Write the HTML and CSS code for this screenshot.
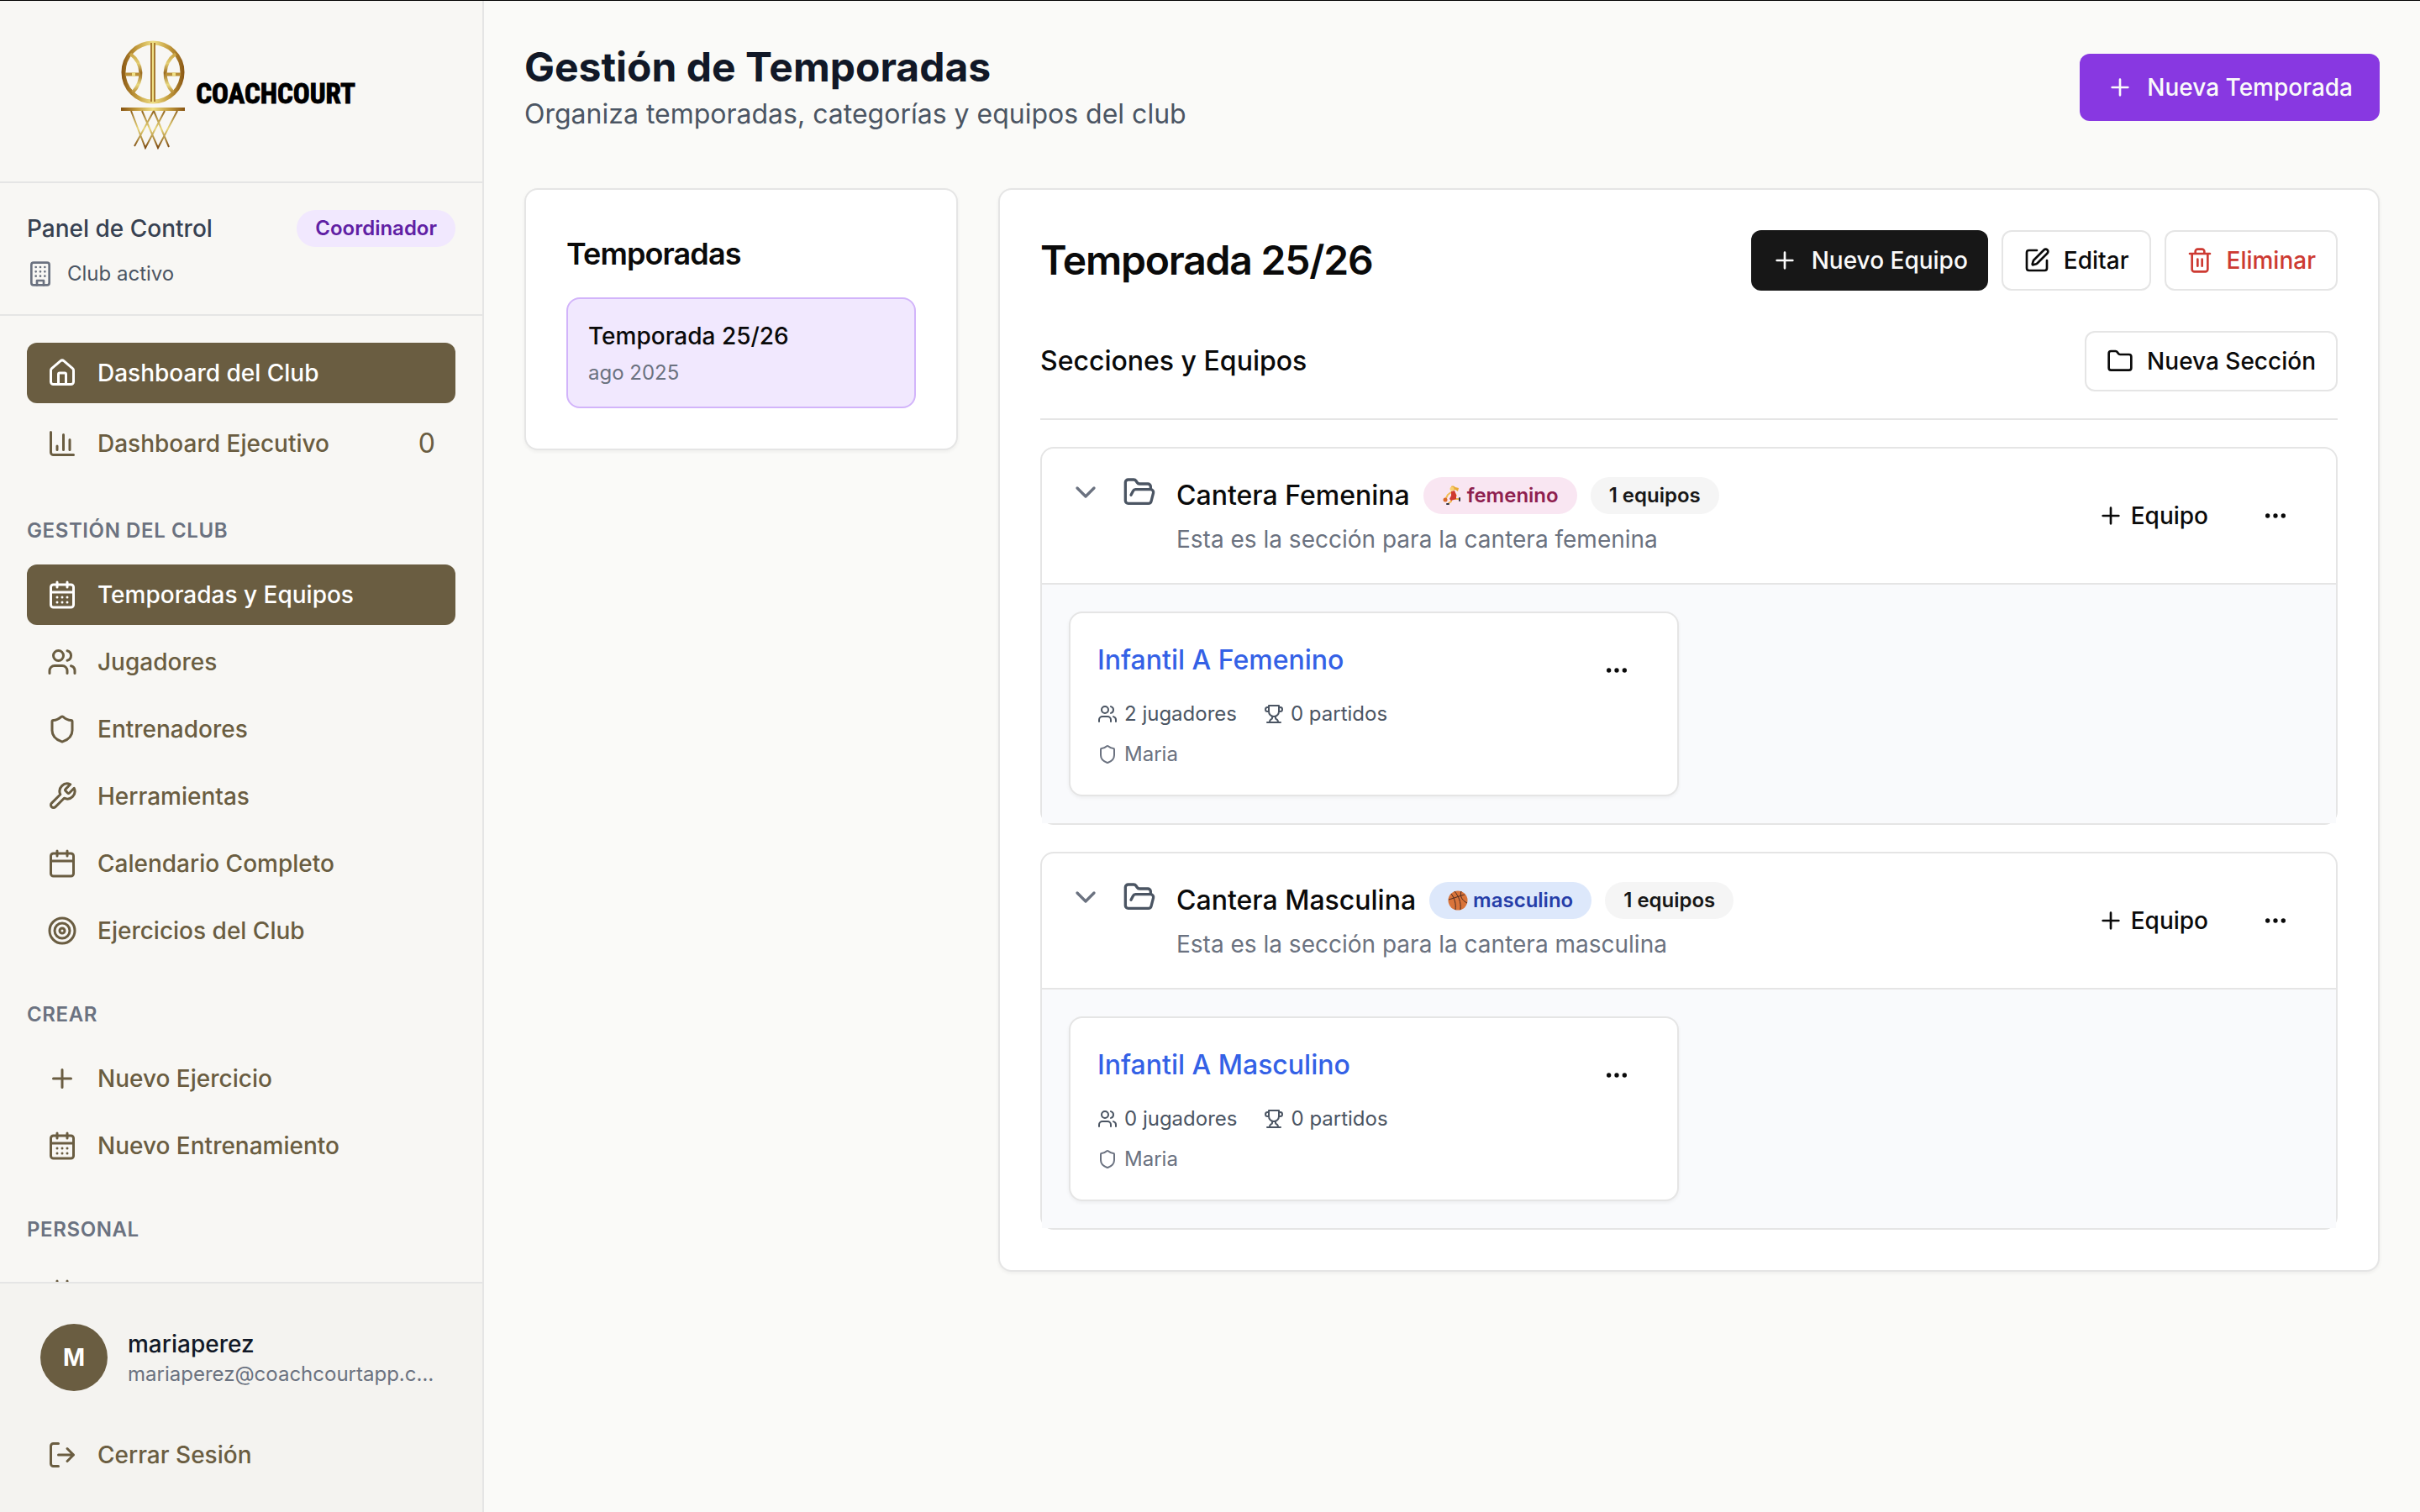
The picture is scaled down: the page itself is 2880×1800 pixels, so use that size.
FILE: index.html
```html
<!DOCTYPE html>
<html lang="es">
<head>
    <meta charset="UTF-8">
    <meta name="viewport" content="width=device-width, initial-scale=1">
    <title>CoachCourt - Gestión de Temporadas</title>
    <link rel="stylesheet" href="styles.css">
</head>
<body>
    <!-- icons -->
    <svg class="sprite" aria-hidden="true">
        <symbol id="home" viewBox="0 0 24 24"><path d="M15 21v-8a1 1 0 0 0-1-1h-4a1 1 0 0 0-1 1v8"/><path d="M3 10a2 2 0 0 1 .709-1.528l7-5.999a2 2 0 0 1 2.582 0l7 5.999A2 2 0 0 1 21 10v9a2 2 0 0 1-2 2H5a2 2 0 0 1-2-2z"/></symbol>
        <symbol id="chart" viewBox="0 0 24 24"><path d="M3 3v16a2 2 0 0 0 2 2h16M18 17V9M13 17V5M8 17v-3"/></symbol>
        <symbol id="calendar" viewBox="0 0 24 24"><path d="M8 2v4M16 2v4M3 10h18"/><rect width="18" height="18" x="3" y="4" rx="2"/></symbol>
        <symbol id="calendar-days" viewBox="0 0 24 24"><path d="M8 2v4M16 2v4M3 10h18M8 14h.01M12 14h.01M16 14h.01M8 18h.01M12 18h.01M16 18h.01"/><rect width="18" height="18" x="3" y="4" rx="2"/></symbol>
        <symbol id="users" viewBox="0 0 24 24"><path d="M16 21v-2a4 4 0 0 0-4-4H6a4 4 0 0 0-4 4v2"/><circle cx="9" cy="7" r="4"/><path d="M22 21v-2a4 4 0 0 0-3-3.87M16 3.13a4 4 0 0 1 0 7.75"/></symbol>
        <symbol id="shield" viewBox="0 0 24 24"><path d="M20 13c0 5-3.5 7.5-7.66 8.95a1 1 0 0 1-.67-.01C7.5 20.5 4 18 4 13V6a1 1 0 0 1 1-1c2 0 4.5-1.2 6.24-2.72a1.17 1.17 0 0 1 1.52 0C14.51 3.81 17 5 19 5a1 1 0 0 1 1 1z"/></symbol>
        <symbol id="wrench" viewBox="0 0 24 24"><path d="M14.7 6.3a1 1 0 0 0 0 1.4l1.6 1.6a1 1 0 0 0 1.4 0l3.77-3.77a6 6 0 0 1-7.94 7.94l-6.91 6.91a2.12 2.12 0 0 1-3-3l6.91-6.91a6 6 0 0 1 7.94-7.94l-3.76 3.76z"/></symbol>
        <symbol id="target" viewBox="0 0 24 24"><circle cx="12" cy="12" r="10"/><circle cx="12" cy="12" r="6"/><circle cx="12" cy="12" r="2"/></symbol>
        <symbol id="plus" viewBox="0 0 24 24"><path d="M5 12h14M12 5v14"/></symbol>
        <symbol id="logout" viewBox="0 0 24 24"><path d="M9 21H5a2 2 0 0 1-2-2V5a2 2 0 0 1 2-2h4M16 17l5-5-5-5M21 12H9"/></symbol>
        <symbol id="building" viewBox="0 0 24 24"><rect width="16" height="20" x="4" y="2" rx="2"/><path d="M9 22v-4h6v4M8 6h.01M16 6h.01M12 6h.01M12 10h.01M12 14h.01M16 10h.01M16 14h.01M8 10h.01M8 14h.01"/></symbol>
        <symbol id="edit" viewBox="0 0 24 24"><path d="M12 3H5a2 2 0 0 0-2 2v14a2 2 0 0 0 2 2h14a2 2 0 0 0 2-2v-7"/><path d="M18.375 2.625a1 1 0 0 1 3 3l-9.013 9.014a2 2 0 0 1-.853.505l-2.873.84a.5.5 0 0 1-.62-.62l.84-2.873a2 2 0 0 1 .506-.852z"/></symbol>
        <symbol id="trash" viewBox="0 0 24 24"><path d="M3 6h18M19 6v14c0 1-1 2-2 2H7c-1 0-2-1-2-2V6M8 6V4c0-1 1-2 2-2h4c1 0 2 1 2 2v2M10 11v6M14 11v6"/></symbol>
        <symbol id="folder" viewBox="0 0 24 24"><path d="M20 20a2 2 0 0 0 2-2V8a2 2 0 0 0-2-2h-7.9a2 2 0 0 1-1.69-.9L9.6 3.9A2 2 0 0 0 7.93 3H4a2 2 0 0 0-2 2v13a2 2 0 0 0 2 2Z"/></symbol>
        <symbol id="folder-open" viewBox="0 0 24 24"><path d="m6 14 1.5-2.9A2 2 0 0 1 9.24 10H20a2 2 0 0 1 1.94 2.5l-1.54 6a2 2 0 0 1-1.95 1.5H4a2 2 0 0 1-2-2V5a2 2 0 0 1 2-2h3.9a2 2 0 0 1 1.69.9l.81 1.2a2 2 0 0 0 1.67.9H18a2 2 0 0 1 2 2v2"/></symbol>
        <symbol id="chevron" viewBox="0 0 24 24"><path d="m6 9 6 6 6-6"/></symbol>
        <symbol id="dots" viewBox="0 0 24 24"><circle cx="12" cy="12" r="1"/><circle cx="19" cy="12" r="1"/><circle cx="5" cy="12" r="1"/></symbol>
        <symbol id="trophy" viewBox="0 0 24 24"><path d="M6 9H4.5a2.5 2.5 0 0 1 0-5H6M18 9h1.5a2.5 2.5 0 0 0 0-5H18M4 22h16M10 14.66V17c0 .55-.47.98-.97 1.21C7.85 18.75 7 20.24 7 22M14 14.66V17c0 .55.47.98.97 1.21C16.15 18.75 17 20.24 17 22M18 2H6v7a6 6 0 0 0 12 0V2Z"/></symbol>
    </svg>

    <aside class="sidebar">
        <div class="logo">
            <svg class="logo-mark" viewBox="0 0 78 132" aria-hidden="true">
                <defs>
                    <linearGradient id="gold" x1="0" y1="0" x2="78" y2="0" gradientUnits="userSpaceOnUse">
                        <stop offset="0" stop-color="#84500f"/>
                        <stop offset=".25" stop-color="#c29a3c"/>
                        <stop offset=".5" stop-color="#efdf85"/>
                        <stop offset=".75" stop-color="#c29a3c"/>
                        <stop offset="1" stop-color="#84500f"/>
                    </linearGradient>
                    <linearGradient id="goldNet" x1="0" y1="84" x2="0" y2="130" gradientUnits="userSpaceOnUse">
                        <stop offset="0" stop-color="#8a5a18"/>
                        <stop offset=".5" stop-color="#e8d67a"/>
                        <stop offset="1" stop-color="#7d4a10"/>
                    </linearGradient>
                    <linearGradient id="goldSeam" x1="0" y1="18" x2="0" y2="64" gradientUnits="userSpaceOnUse">
                        <stop offset="0" stop-color="#c9a445"/>
                        <stop offset=".25" stop-color="#e3cd72"/>
                        <stop offset=".5" stop-color="#9a6a20"/>
                        <stop offset=".8" stop-color="#e9d981"/>
                        <stop offset="1" stop-color="#b98f38"/>
                    </linearGradient>
                </defs>
                <g fill="none">
                    <circle cx="39" cy="40" r="35" stroke="url(#gold)" stroke-width="5"/>
                    <path d="M12 18C28 30 28 50 15 64M66 18C50 30 50 50 63 64" stroke="url(#goldSeam)" stroke-width="4"/>
                    <path d="M6 42.500h18M54 42.500h18" stroke="#b98f38" stroke-width="4"/>
                    <path d="M14 42.500h4M62 42.500h4" stroke="#efdf85" stroke-width="4"/>
                    <path d="M39 5v70" stroke="#a87a30" stroke-width="6"/>
                    <path d="M39 5v70" stroke="#efdf85" stroke-width="2"/>
                    <path d="M1 84h76" stroke="url(#gold)" stroke-width="4"/>
                    <path d="M13 86 30 130 53 86M26 86 45 130 68 86M40 86 17 128M40 86 58 129" stroke="url(#goldNet)" stroke-width="2"/>
                </g>
            </svg>
            <span class="logo-text">COACHCOURT</span>
        </div>

        <div class="panel">
            <div class="panel-row">
                <span class="panel-title">Panel de Control</span>
                <span class="badge badge-purple">Coordinador</span>
            </div>
            <div class="panel-club">
                <svg class="icon"><use href="#building"/></svg>
                <span>Club activo</span>
            </div>
        </div>

        <nav class="nav">
            <div class="nav-group">
                <a href="#" class="nav-link active"><svg class="icon"><use href="#home"/></svg><span>Dashboard del Club</span></a>
                <a href="#" class="nav-link"><svg class="icon"><use href="#chart"/></svg><span>Dashboard Ejecutivo</span><span class="nav-count">0</span></a>
            </div>
            <div class="nav-group">
                <h3 class="nav-label">GESTIÓN DEL CLUB</h3>
                <a href="#" class="nav-link active"><svg class="icon"><use href="#calendar-days"/></svg><span>Temporadas y Equipos</span></a>
                <a href="#" class="nav-link"><svg class="icon"><use href="#users"/></svg><span>Jugadores</span></a>
                <a href="#" class="nav-link"><svg class="icon"><use href="#shield"/></svg><span>Entrenadores</span></a>
                <a href="#" class="nav-link"><svg class="icon"><use href="#wrench"/></svg><span>Herramientas</span></a>
                <a href="#" class="nav-link"><svg class="icon"><use href="#calendar"/></svg><span>Calendario Completo</span></a>
                <a href="#" class="nav-link"><svg class="icon"><use href="#target"/></svg><span>Ejercicios del Club</span></a>
            </div>
            <div class="nav-group">
                <h3 class="nav-label">CREAR</h3>
                <a href="#" class="nav-link"><svg class="icon"><use href="#plus"/></svg><span>Nuevo Ejercicio</span></a>
                <a href="#" class="nav-link"><svg class="icon"><use href="#calendar-days"/></svg><span>Nuevo Entrenamiento</span></a>
            </div>
            <div class="nav-group">
                <h3 class="nav-label">PERSONAL</h3>
                <a href="#" class="nav-link" aria-label="Calendario"><svg class="icon"><use href="#calendar"/></svg></a>
            </div>
        </nav>

        <div class="sidebar-footer">
            <div class="profile">
                <div class="avatar">M</div>
                <div class="profile-info">
                    <div class="profile-name">mariaperez</div>
                    <div class="profile-email">mariaperez@coachcourtapp.com</div>
                </div>
            </div>
            <button type="button" class="nav-link"><svg class="icon"><use href="#logout"/></svg><span>Cerrar Sesión</span></button>
        </div>
    </aside>

    <main class="main">
        <header class="page-header">
            <div>
                <h1>Gestión de Temporadas</h1>
                <p>Organiza temporadas, categorías y equipos del club</p>
            </div>
            <button type="button" class="btn btn-primary"><svg class="icon"><use href="#plus"/></svg>Nueva Temporada</button>
        </header>

        <div class="grid">
            <section class="card">
                <h2 class="card-title">Temporadas</h2>
                <button type="button" class="season">
                    <span class="season-name">Temporada 25/26</span>
                    <span class="season-date">ago 2025</span>
                </button>
            </section>

            <section class="card card-wide">
                <div class="row">
                    <h2 class="season-title">Temporada 25/26</h2>
                    <div class="actions">
                        <button type="button" class="btn btn-dark"><svg class="icon"><use href="#plus"/></svg>Nuevo Equipo</button>
                        <button type="button" class="btn btn-outline"><svg class="icon"><use href="#edit"/></svg>Editar</button>
                        <button type="button" class="btn btn-outline btn-danger"><svg class="icon"><use href="#trash"/></svg>Eliminar</button>
                    </div>
                </div>

                <div class="row sections-head">
                    <h3>Secciones y Equipos</h3>
                    <button type="button" class="btn btn-outline"><svg class="icon"><use href="#folder"/></svg>Nueva Sección</button>
                </div>

                <div class="section">
                    <div class="section-head">
                        <button type="button" class="toggle" aria-label="Contraer"><svg class="icon"><use href="#chevron"/></svg></button>
                        <svg class="icon folder"><use href="#folder-open"/></svg>
                        <div class="section-info">
                            <div class="section-name">
                                <h4>Cantera Femenina</h4>
                                <span class="badge badge-pink">
                                    <svg class="emoji" viewBox="0 0 24 24" aria-hidden="true">
                                        <g fill="none" stroke-linecap="round" stroke-linejoin="round">
                                            <path d="M11 8 7 11 5 15M14 8l3 4" stroke="#f3bd55" stroke-width="2"/>
                                            <path d="M11 16 11 19 8 21M15 16l5 0" stroke="#f0b64c" stroke-width="2"/>
                                            <path d="M8 22H6M21 15v3" stroke="#33333d" stroke-width="2"/>
                                        </g>
                                        <path d="M11 7l4-1 2 5v5l-6 2-2-2 2-4z" fill="#cf3a30"/>
                                        <path d="M11 1c2-1 4 0 5 1l4 1-1 4-3-2-4 1z" fill="#e8aa35"/>
                                        <circle cx="12" cy="4" r="2.500" fill="#f9d071"/>
                                        <circle cx="4" cy="17" r="2.500" fill="#d9692a"/>
                                    </svg>
                                    femenino
                                </span>
                                <span class="badge badge-gray">1 equipos</span>
                            </div>
                            <p>Esta es la sección para la cantera femenina</p>
                        </div>
                        <div class="actions">
                            <button type="button" class="btn btn-ghost"><svg class="icon"><use href="#plus"/></svg>Equipo</button>
                            <button type="button" class="btn btn-ghost" aria-label="Más opciones"><svg class="icon"><use href="#dots"/></svg></button>
                        </div>
                    </div>
                    <div class="teams">
                        <article class="team">
                            <div class="team-info">
                                <a href="#" class="team-name">Infantil A Femenino</a>
                                <div class="team-stats">
                                    <span class="stat"><svg class="icon"><use href="#users"/></svg>2 jugadores</span>
                                    <span class="stat"><svg class="icon"><use href="#trophy"/></svg>0 partidos</span>
                                </div>
                                <div class="stat coach"><svg class="icon"><use href="#shield"/></svg>Maria</div>
                            </div>
                            <button type="button" class="btn btn-ghost" aria-label="Más opciones"><svg class="icon"><use href="#dots"/></svg></button>
                        </article>
                    </div>
                </div>

                <div class="section">
                    <div class="section-head">
                        <button type="button" class="toggle" aria-label="Contraer"><svg class="icon"><use href="#chevron"/></svg></button>
                        <svg class="icon folder"><use href="#folder-open"/></svg>
                        <div class="section-info">
                            <div class="section-name">
                                <h4>Cantera Masculina</h4>
                                <span class="badge badge-blue">
                                    <svg class="emoji" viewBox="0 0 24 24" aria-hidden="true">
                                        <circle cx="12" cy="12" r="11.500" fill="#d9743a"/>
                                        <path d="M1 11C8 9 16 6 20 5M8 1c5 6 8 13 7 22M4 4c4 5 6 12 5 19M16 1c-2 6 1 11 7 14" fill="none" stroke="#4a2a20" stroke-width="1"/>
                                    </svg>
                                    masculino
                                </span>
                                <span class="badge badge-gray">1 equipos</span>
                            </div>
                            <p>Esta es la sección para la cantera masculina</p>
                        </div>
                        <div class="actions">
                            <button type="button" class="btn btn-ghost"><svg class="icon"><use href="#plus"/></svg>Equipo</button>
                            <button type="button" class="btn btn-ghost" aria-label="Más opciones"><svg class="icon"><use href="#dots"/></svg></button>
                        </div>
                    </div>
                    <div class="teams">
                        <article class="team">
                            <div class="team-info">
                                <a href="#" class="team-name">Infantil A Masculino</a>
                                <div class="team-stats">
                                    <span class="stat"><svg class="icon"><use href="#users"/></svg>0 jugadores</span>
                                    <span class="stat"><svg class="icon"><use href="#trophy"/></svg>0 partidos</span>
                                </div>
                                <div class="stat coach"><svg class="icon"><use href="#shield"/></svg>Maria</div>
                            </div>
                            <button type="button" class="btn btn-ghost" aria-label="Más opciones"><svg class="icon"><use href="#dots"/></svg></button>
                        </article>
                    </div>
                </div>
            </section>
        </div>
    </main>
</body>
</html>
```

FILE: styles.css
```css
* {
    box-sizing: border-box;
    margin: 0;
    padding: 0;
}
body {
    display: flex;
    min-height: 100vh;
    font-family: Inter, "Liberation Sans", sans-serif;
    font-size: 28px;
    line-height: 40px;
    color: #0a0a0a;
    background: #fafaf8;
}
/* thin line along the top edge of the window */
body::before {
    content: "";
    position: fixed;
    top: 0;
    left: 0;
    right: 0;
    height: 1px;
    background: #000;
    z-index: 10;
}
button {
    font: inherit;
    color: inherit;
    background: none;
    border: none;
    cursor: pointer;
}
a {
    color: inherit;
    text-decoration: none;
}
.sprite {
    display: none;
}
.icon {
    flex-shrink: 0;
    width: 32px;
    height: 32px;
    fill: none;
    stroke: currentColor;
    stroke-width: 2;
    stroke-linecap: round;
    stroke-linejoin: round;
}

/* sidebar */
.sidebar {
    display: flex;
    flex-direction: column;
    flex-shrink: 0;
    width: 576px;
    height: 100vh;
    background: #f8f7f4;
    border-right: 2px solid #e5e5e5;
}
.logo {
    display: flex;
    align-items: center;
    justify-content: center;
    gap: 12px;
    padding: 46px 40px 38px 32px;
    border-bottom: 2px solid #e5e5e5;
}
.logo-mark {
    width: 78px;
    height: 132px;
}
.logo-text {
    font-family: "Liberation Sans Narrow", "Roboto Condensed", "Liberation Sans", sans-serif;
    font-size: 33px;
    font-weight: bold;
    color: #000;
    -webkit-text-stroke: 1px #000;
}
.panel {
    padding: 32px;
    border-bottom: 2px solid #e5e5e5;
}
.panel-row {
    display: flex;
    align-items: center;
    justify-content: space-between;
    margin-bottom: 16px;
}
.panel-title {
    font-weight: 500;
    color: #374151;
}
.panel-club {
    display: flex;
    align-items: center;
    gap: 16px;
    font-size: 24px;
    line-height: 32px;
    color: #4b5563;
}
.panel-club .icon {
    color: #6b7280;
}
.badge {
    display: inline-flex;
    align-items: center;
    gap: 6px;
    height: 44px;
    padding: 0 22px;
    border-radius: 22px;
    font-size: 24px;
    font-weight: 600;
    line-height: 32px;
    white-space: nowrap;
}
.badge-purple {
    background: #f1e8fe;
    color: #6020a4;
}
.badge-pink {
    background: #f9e6f2;
    color: #8e204f;
}
.badge-blue {
    background: #dde8fb;
    color: #263ea8;
}
.badge-gray {
    background: #f5f5f5;
    color: #171717;
}
.emoji {
    width: 24px;
    height: 24px;
}
.nav {
    flex: 1;
    min-height: 0;
    padding: 32px;
    overflow-y: auto;
    scrollbar-width: none;
}
.nav-group {
    display: flex;
    flex-direction: column;
    gap: 8px;
    margin-bottom: 48px;
}
.nav-label {
    margin-bottom: 16px;
    font-size: 24px;
    font-weight: 600;
    line-height: 32px;
    letter-spacing: 0.025em;
    color: #6b7280;
}
.nav-link {
    display: flex;
    align-items: center;
    gap: 24px;
    width: 100%;
    min-height: 72px;
    padding: 16px 24px;
    border-radius: 12px;
    font-weight: 500;
    color: #6a5d41;
}
.nav-link .icon {
    width: 36px;
    height: 36px;
}
.nav-link.active {
    background: #6a5d41;
    color: #fff;
}
.nav-count {
    margin-left: auto;
    font-size: 32px;
    font-weight: 400;
    line-height: 48px;
}
.sidebar-footer {
    padding: 32px;
    background: #f4f3f0;
    border-top: 2px solid #e5e5e5;
}
.profile {
    display: flex;
    align-items: center;
    gap: 24px;
    padding: 16px;
    margin-bottom: 24px;
}
.avatar {
    display: flex;
    align-items: center;
    justify-content: center;
    flex-shrink: 0;
    width: 80px;
    height: 80px;
    border-radius: 50%;
    background: #6a5d41;
    color: #fff;
    font-weight: 700;
}
.profile-info {
    min-width: 0;
}
.profile-name {
    font-weight: 500;
    color: #111827;
}
.profile-email {
    overflow: hidden;
    text-overflow: ellipsis;
    white-space: nowrap;
    font-size: 24px;
    line-height: 32px;
    color: #6b7280;
}

/* main content */
.main {
    flex: 1;
    min-width: 0;
    padding: 48px;
}
.page-header {
    display: flex;
    align-items: center;
    justify-content: space-between;
    margin-bottom: 64px;
}
.page-header h1 {
    font-size: 48px;
    font-weight: 700;
    line-height: 64px;
    color: #111827;
}
.page-header p {
    font-size: 32px;
    line-height: 48px;
    color: #4b5563;
}
.btn {
    display: inline-flex;
    align-items: center;
    gap: 16px;
    height: 72px;
    padding: 0 24px;
    border-radius: 12px;
    font-weight: 500;
    white-space: nowrap;
}
.btn-primary {
    height: 80px;
    padding: 0 32px;
    background: #8838e1;
    color: #fafafa;
}
.btn-dark {
    background: #171717;
    color: #fafafa;
}
.btn-outline {
    background: #fff;
    border: 2px solid #e5e5e5;
}
.btn-danger {
    color: #cd3a32;
}
.btn-ghost {
    gap: 8px;
}
.grid {
    display: grid;
    grid-template-columns: repeat(4, 1fr);
    gap: 48px;
    align-items: start;
}
.card {
    padding: 48px;
    background: #fff;
    border: 2px solid #e5e5e5;
    border-radius: 16px;
    box-shadow: 0 2px 4px rgba(0, 0, 0, 0.05);
}
.card-wide {
    grid-column: span 3;
}
.card-title {
    margin-bottom: 24px;
    font-size: 36px;
    font-weight: 600;
    line-height: 56px;
    letter-spacing: -0.025em;
}
.season {
    display: flex;
    flex-direction: column;
    gap: 8px;
    width: 100%;
    padding: 24px;
    text-align: left;
    background: #f1e8fe;
    border: 2px solid #d2b4fa;
    border-radius: 16px;
}
.season-name {
    font-weight: 500;
}
.season-date {
    font-size: 24px;
    line-height: 32px;
    color: #6b7280;
}
.row {
    display: flex;
    align-items: center;
    justify-content: space-between;
}
.season-title {
    font-size: 48px;
    font-weight: 600;
    line-height: 64px;
    letter-spacing: -0.025em;
}
.actions {
    display: flex;
    gap: 16px;
}
.sections-head {
    margin-top: 48px;
    padding-bottom: 32px;
    border-bottom: 2px solid #e5e5e5;
}
.sections-head h3 {
    font-size: 32px;
    font-weight: 500;
    line-height: 48px;
}
.section {
    margin-top: 32px;
    border: 2px solid #e5e5e5;
    border-radius: 16px;
}
.section-head {
    display: flex;
    align-items: center;
    gap: 24px;
    padding: 32px;
}
.section-head .toggle,
.section-head .folder {
    align-self: flex-start;
    width: 40px;
    height: 40px;
    color: #4b5563;
}
.toggle .icon {
    display: block;
    width: 40px;
    height: 40px;
    color: #6b7280;
}
.section-info {
    flex: 1;
    min-width: 0;
}
.section-name {
    display: flex;
    align-items: center;
    gap: 16px;
    margin-bottom: 8px;
}
.section-name h4 {
    font-size: 32px;
    font-weight: 500;
    line-height: 48px;
}
.section-info p {
    color: #6b7280;
}
.teams {
    display: grid;
    grid-template-columns: repeat(2, 1fr);
    gap: 24px;
    padding: 32px;
    background: #f9fafc;
    border-top: 2px solid #e5e5e5;
}
.team {
    display: flex;
    align-items: flex-start;
    justify-content: space-between;
    padding: 32px;
    background: #fff;
    border: 2px solid #e5e5e5;
    border-radius: 16px;
    box-shadow: 0 2px 4px rgba(0, 0, 0, 0.05);
}
.team-name {
    font-size: 32px;
    font-weight: 500;
    line-height: 48px;
    color: #3461e6;
}
.team-stats {
    display: flex;
    gap: 32px;
    margin: 24px 0 16px;
}
.stat {
    display: flex;
    align-items: center;
    gap: 8px;
    font-size: 24px;
    line-height: 32px;
    color: #4b5563;
}
.stat .icon {
    width: 24px;
    height: 24px;
}
.coach {
    color: #6b7280;
}
```
